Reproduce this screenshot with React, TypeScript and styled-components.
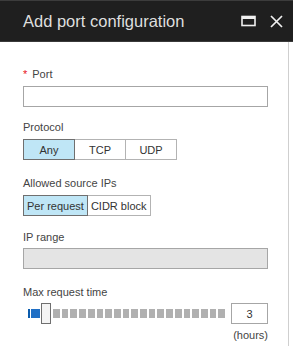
import React from 'react';
import styled, { createGlobalStyle } from 'styled-components';

const GlobalStyle = createGlobalStyle`
  html, body {
    margin: 0;
    padding: 0;
    background: #ffffff;
  }
  body {
    font-family: "Liberation Sans", Arial, sans-serif;
    color: #444;
  }
`;

// Barra oscura de arriba
const Header = styled.div`
  display: flex;
  align-items: center;
  height: 40px;
  background: #1f1f1f;
  border-top: 1px solid #3c3c3c;
  border-bottom: 1px solid #3a3a3a;
  padding: 0 10px 0 23px;
`;

const Title = styled.h1`
  flex: 1;
  margin: 0;
  font-weight: normal;
  font-size: 16.5px;
  color: #dedede;
`;

const HeaderIcons = styled.div`
  display: flex;
  align-items: center;
  gap: 14px;
`;

// Cuerpo del panel
const Body = styled.div`
  width: 289px;
  box-sizing: border-box;
  border-right: 1px solid #cfcfcf;
  padding: 24px 20px 4px 23px;
  min-height: 304px;
`;

const Field = styled.div<{ $gap?: number }>`
  margin-top: ${(p) => p.$gap ?? 0}px;
`;

const Label = styled.div<{ $space?: number }>`
  font-size: 11px;
  line-height: 16px;
  color: #444;
  margin-bottom: ${(p) => p.$space ?? 4}px;
`;

const Required = styled.span`
  color: #e81123;
  margin-right: 5px;
`;

const TextBox = styled.div<{ $disabled?: boolean }>`
  height: 21px;
  box-sizing: border-box;
  border: 1px solid #a6a6a6;
  background: ${(p) => (p.$disabled ? '#e4e4e4' : '#ffffff')};
`;

const Segmented = styled.div`
  display: flex;
`;

const Segment = styled.div<{ $active?: boolean; $width?: number }>`
  height: 21px;
  box-sizing: border-box;
  ${(p) => (p.$width ? `width: ${p.$width}px;` : 'padding: 0 3px;')}
  display: flex;
  align-items: center;
  justify-content: center;
  font-size: 11px;
  color: #333;
  border: 1px solid ${(p) => (p.$active ? '#6f6f6f' : '#b3b3b3')};
  background: ${(p) => (p.$active ? '#bfe6f6' : '#ffffff')};
  margin-left: -1px;
  position: relative;
  z-index: ${(p) => (p.$active ? 1 : 0)};
  &:first-child {
    margin-left: 0;
  }
`;

// Control deslizante
const SliderRow = styled.div`
  display: flex;
  align-items: center;
  padding-left: 5px;
  gap: 6px;
`;

const Track = styled.div`
  flex: 1;
  display: flex;
  align-items: center;
  height: 21px;
`;

const Tick = styled.div<{ $color: string; $width: number }>`
  width: ${(p) => p.$width}px;
  height: 9px;
  background: ${(p) => p.$color};
  margin-right: 1px;
`;

const Thumb = styled.div`
  width: 10px;
  height: 21px;
  box-sizing: border-box;
  border: 1px solid #6f6f6f;
  background: #f4f4f4;
  margin-right: 2px;
`;

const Rest = styled.div`
  flex: 1;
  display: flex;
  gap: 2px;
  height: 9px;
`;

const Step = styled.div`
  flex: 1;
  background: #b0b0b0;
`;

const ValueBox = styled.div`
  width: 37px;
  height: 21px;
  box-sizing: border-box;
  border: 1px solid #a6a6a6;
  display: flex;
  align-items: center;
  justify-content: center;
  font-size: 11px;
  color: #333;
`;

const Unit = styled.div`
  text-align: right;
  font-size: 11px;
  line-height: 16px;
  color: #444;
  margin-top: 3px;
`;

const MaximizeIcon = () => (
  <svg width="15" height="12" viewBox="0 0 15 12">
    <rect x="1" y="1.5" width="13" height="9" fill="none" stroke="#f0f0f0" strokeWidth="1.6" />
    <rect x="1" y="1" width="13" height="3" fill="#f0f0f0" />
  </svg>
);

const CloseIcon = () => (
  <svg width="13" height="13" viewBox="0 0 13 13">
    <path d="M1 1 L12 12 M12 1 L1 12" stroke="#f0f0f0" strokeWidth="1.7" />
  </svg>
);

const App: React.FC = () => {
  const steps = Array.from({ length: 20 });
  return (
    <>
      <GlobalStyle />
      <Header>
        <Title>Add port configuration</Title>
        <HeaderIcons>
          <MaximizeIcon />
          <CloseIcon />
        </HeaderIcons>
      </Header>
      <Body>
        <Field>
          <Label>
            <Required>*</Required>Port
          </Label>
          <TextBox />
        </Field>
        <Field $gap={12}>
          <Label>Protocol</Label>
          <Segmented>
            <Segment $active $width={52}>Any</Segment>
            <Segment $width={52}>TCP</Segment>
            <Segment $width={52}>UDP</Segment>
          </Segmented>
        </Field>
        <Field $gap={15}>
          <Label>Allowed source IPs</Label>
          <Segmented>
            <Segment $active>Per request</Segment>
            <Segment>CIDR block</Segment>
          </Segmented>
        </Field>
        <Field $gap={13}>
          <Label $space={3}>IP range</Label>
          <TextBox $disabled />
        </Field>
        <Field $gap={15}>
          <Label $space={3}>Max request time</Label>
          <SliderRow>
            <Track>
              <Tick $color="#0b5cad" $width={2} />
              <Tick $color="#1f6fc5" $width={9} />
              <Thumb />
              <Rest>
                {steps.map((_, i) => (
                  <Step key={i} />
                ))}
              </Rest>
            </Track>
            <ValueBox>3</ValueBox>
          </SliderRow>
          <Unit>(hours)</Unit>
        </Field>
      </Body>
    </>
  );
};

export default App;
